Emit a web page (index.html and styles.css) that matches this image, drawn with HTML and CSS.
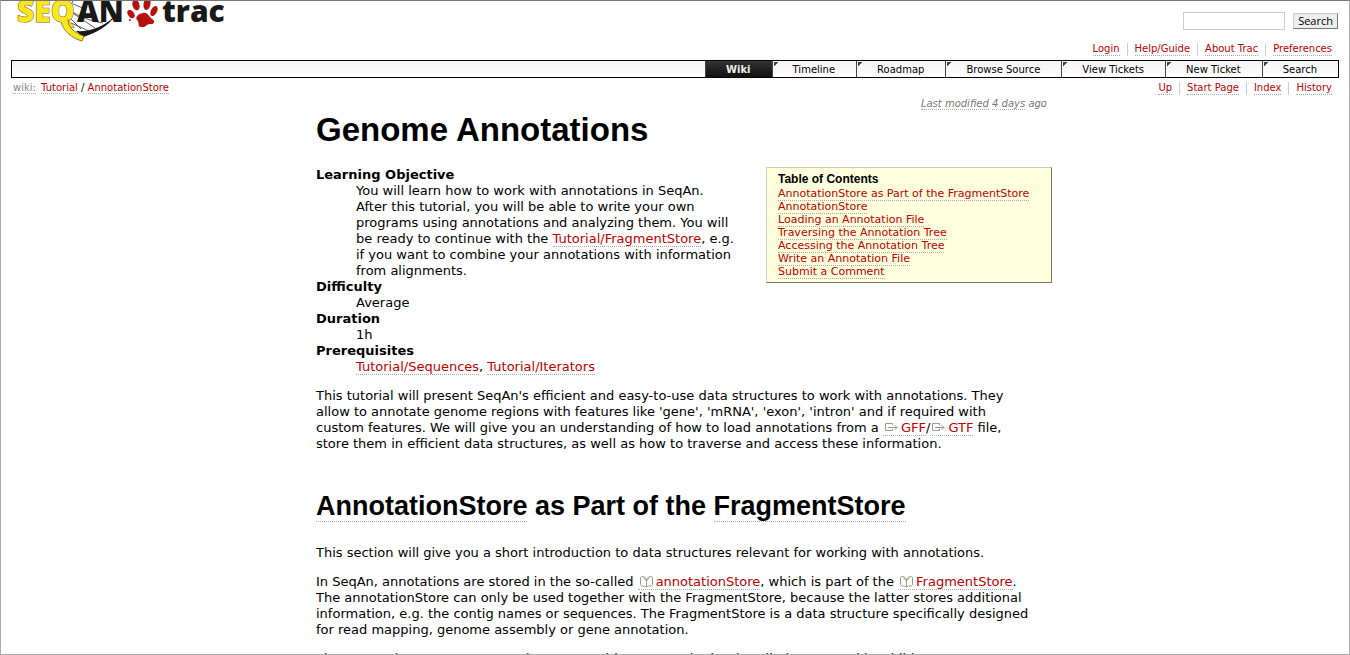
FILE: index.html
```html
<!DOCTYPE html>
<html lang="en">
<head>
<meta charset="utf-8">
<title>Tutorial/AnnotationStore – SeqAn Trac</title>
<link rel="stylesheet" href="styles.css">
</head>
<body>
<div class="page">
<header class="banner">
<a class="logo" href="#" aria-label="SeqAn Trac">
<svg width="220" height="42" viewBox="0 0 220 42" aria-hidden="true">
<g fill="none" stroke="#333" stroke-width=".8">
<path d="M57 8C68 16 80 20 92 22M57 15L70 28M62 -1L57 15M60 22L78 30M62 3L72 7M60 11L84 27M106 -1C110 8 106 14 100 19"/>
</g>
<path d="M65 30C79 31 92 26 103 16C98 24 86 32 72 36Z" fill="#191919"/>
<text class="logo-seq" x="6" y="21">SEQ</text>
<path d="M52 16L57 16C56 25 63 32 73 35L71 40C60 37 52 29 50 19Z" fill="#ffe51c"/>
<path d="M57 18C57 26 63 32 73 35L71 40C60 37 52 29 50 21" fill="none" stroke="#554d12" stroke-width=".7"/>
<text class="logo-an" x="66" y="21">AN</text>
<g fill="#b70e0e">
<ellipse cx="120" cy="13" rx="3" ry="4.500" transform="rotate(-35 120 13)"/>
<ellipse cx="125" cy="4" rx="3.500" ry="5.500" transform="rotate(-14 125 4)"/>
<ellipse cx="136" cy="3" rx="3.500" ry="6" transform="rotate(10 136 3)"/>
<ellipse cx="143" cy="10" rx="3" ry="5.500" transform="rotate(28 143 10)"/>
<path d="M132 12C137 11 138 16 141 18C145 20 143 24 139 23C135 23 135 27 130 26C126 26 129 21 126 19C124 16 127 13 132 12Z"/>
<circle cx="119" cy="19" r="1"/>
</g>
<text class="logo-trac" x="151" y="21">trac</text>
</svg>
</a>
<div class="tools">
<form class="search" role="search">
<input type="text" aria-label="Search query">
<button type="submit">Search</button>
</form>
<nav class="metanav" aria-label="Account">
<ul class="links">
<li><a href="#">Login</a></li>
<li><a href="#">Help/Guide</a></li>
<li><a href="#">About Trac</a></li>
<li><a href="#">Preferences</a></li>
</ul>
</nav>
</div>
</header>
<nav class="mainnav" aria-label="Main">
<ul>
<li class="active"><a href="#">Wiki</a></li>
<li><a href="#">Timeline</a></li>
<li><a href="#">Roadmap</a></li>
<li><a href="#">Browse Source</a></li>
<li><a href="#">View Tickets</a></li>
<li><a href="#">New Ticket</a></li>
<li><a href="#">Search</a></li>
</ul>
</nav>
<div class="context">
<div class="path"><a class="root" href="#">wiki:</a> <a href="#">Tutorial</a> / <a href="#">AnnotationStore</a></div>
<ul class="links">
<li><a href="#">Up</a></li>
<li><a href="#">Start Page</a></li>
<li><a href="#">Index</a></li>
<li><a href="#">History</a></li>
</ul>
</div>
<main class="wiki">
<p class="modified"><a href="#">Last modified</a> <a href="#">4 days</a> ago</p>
<h1>Genome Annotations</h1>
<nav class="toc" aria-label="Table of Contents">
<h4>Table of Contents</h4>
<ol>
<li><a href="#store">AnnotationStore as Part of the FragmentStore</a></li>
<li><a href="#">AnnotationStore</a></li>
<li><a href="#">Loading an Annotation File</a></li>
<li><a href="#">Traversing the Annotation Tree</a></li>
<li><a href="#">Accessing the Annotation Tree</a></li>
<li><a href="#">Write an Annotation File</a></li>
<li><a href="#">Submit a Comment</a></li>
</ol>
</nav>
<dl>
<dt>Learning Objective</dt>
<dd>You will learn how to work with annotations in SeqAn. After this tutorial, you will be able to write your own programs using annotations and analyzing them. You will be ready to continue with the <a href="#">Tutorial/FragmentStore</a>, e.g. if you want to combine your annotations with information from alignments.</dd>
<dt>Difficulty</dt>
<dd>Average</dd>
<dt>Duration</dt>
<dd>1h</dd>
<dt>Prerequisites</dt>
<dd><a href="#">Tutorial/Sequences</a>, <a href="#">Tutorial/Iterators</a></dd>
</dl>
<p>This tutorial will present SeqAn's efficient and easy-to-use data structures to work with annotations. They allow to annotate genome regions with features like 'gene', 'mRNA', 'exon', 'intron' and if required with custom features. We will give you an understanding of how to load annotations from a <a class="ext" href="#"><svg width="13" height="9" viewBox="0 0 13 9" aria-hidden="true"><path d="M7.500 2V.5H.5V7.500H7.500V6M3 4.500H12M9.500 2L12 4.500L9.500 7"/></svg>GFF</a>/<a class="ext" href="#"><svg width="13" height="9" viewBox="0 0 13 9" aria-hidden="true"><path d="M7.500 2V.5H.5V7.500H7.500V6M3 4.500H12M9.500 2L12 4.500L9.500 7"/></svg>GTF</a> file, store them in efficient data structures, as well as how to traverse and access these information.</p>
<h2 id="store"><a href="#">AnnotationStore</a> as Part of the <a href="#">FragmentStore</a></h2>
<p>This section will give you a short introduction to data structures relevant for working with annotations.</p>
<p>In SeqAn, annotations are stored in the so-called <a class="doc" href="#"><svg width="13" height="12" viewBox="0 0 13 12" aria-hidden="true"><path d="M6.500 11V4C6 1.500 4 .5 2 .5C1 .5.5 1 .5 2V8C.5 9 1 10 2 10C4 10 6 10 6.500 11C7 10 9 10 11 10C12 10 12.500 9 12.500 8V2C12.500 1 12 .5 11 .5C9 .5 7 1.500 6.500 4M3.500 1.500L6.500 5L9.500 1.500"/></svg>annotationStore</a>, which is part of the <a class="doc" href="#"><svg width="13" height="12" viewBox="0 0 13 12" aria-hidden="true"><path d="M6.500 11V4C6 1.500 4 .5 2 .5C1 .5.5 1 .5 2V8C.5 9 1 10 2 10C4 10 6 10 6.500 11C7 10 9 10 11 10C12 10 12.500 9 12.500 8V2C12.500 1 12 .5 11 .5C9 .5 7 1.500 6.500 4M3.500 1.500L6.500 5L9.500 1.500"/></svg>FragmentStore</a>. The annotationStore can only be used together with the FragmentStore, because the latter stores additional information, e.g. the contig names or sequences. The FragmentStore is a data structure specifically designed for read mapping, genome assembly or gene annotation.</p>
<p>The annotations are represented as a tree with a root node that is called "root" and its children.</p>
</main>
</div>
</body>
</html>
```
FILE: styles.css
```css
* { box-sizing: border-box; }
html { height: 100%; overflow: hidden; }
body {
  height: 100%;
  margin: 0;
  background: #fff;
  color: #000;
  font-family: Verdana, "DejaVu Sans", sans-serif;
  font-size: 13px;
  line-height: 16px;
}
.page {
  height: 100%;
  overflow: hidden;
  padding: 0 10px;
  border: 1px solid #aaa;
  border-top-color: #777;
}
a { color: #b00; text-decoration: none; border-bottom: 1px dotted #aaa; }
ul, ol { list-style: none; margin: 0; padding: 0; }
.banner { display: flex; justify-content: space-between; height: 59px; }
.logo { border: 0; height: 42px; }
.logo svg { display: block; }
.logo text { font-family: "Open Sans", sans-serif; font-weight: 800; font-size: 30px; }
.logo .logo-seq { fill: #ffe51c; stroke: #665c14; stroke-width: 1px; paint-order: stroke; }
.logo .logo-an, .logo .logo-trac { fill: #191919; }
.tools { display: flex; flex-direction: column; align-items: flex-end; padding-top: 11px; }
.search { display: flex; align-items: center; gap: 8px; margin: 0 1px 0 0; }
.search input { width: 102px; height: 18px; border: 1px solid #ccc; padding: 0 3px; background: #fff; }
.search button {
  height: 16px;
  padding: 0 4px;
  border: 1px solid;
  border-color: #ccc #777 #777 #ccc;
  border-radius: 0;
  background: #eee;
  color: #000;
  font: 11px "Open Sans", sans-serif;
  line-height: 14px;
}
.metanav { margin-top: 13px; }
.links { display: flex; font-size: 10px; line-height: 12px; padding-right: 7px; }
.links li { padding: 0 7px; border-left: 1px solid #ccc; }
.links li:first-child { border-left: 0; }
.links li:last-child { padding-right: 0; }
.links a { display: block; }
.mainnav {
  border: 1px solid #000;
  background: linear-gradient(#f3f3f3, #fff);
  font-size: 10px;
  line-height: 15px;
}
.mainnav ul { display: flex; justify-content: flex-end; }
.mainnav li { border-left: 1px solid #444; }
.mainnav a {
  display: block;
  padding: 1px 21px 0 20px;
  border: 0;
  color: #000;
  background: linear-gradient(135deg, #444 3px, transparent 3px) 1px 1px / 5px 5px no-repeat;
}
.mainnav .active a { background: linear-gradient(#333, #111); color: #eee; font-weight: bold; }
.context { display: flex; justify-content: space-between; margin-top: 4px; font-size: 10px; line-height: 12px; }
.path { padding-left: 2px; }
.path .root { color: #888; margin-right: 2px; }
.wiki { max-width: 754px; margin: 2px auto 0; padding-left: 18px; }
.wiki p { max-width: 716px; margin: 13px 0; }
.wiki .modified { max-width: none; margin: 0; padding-right: 5px; text-align: right; font-size: 10px; line-height: 14px; font-style: italic; color: #777; }
.modified a { color: #777; }
h1, h2, h4 { font-family: Arial, "Liberation Sans", sans-serif; font-weight: bold; }
h1 { margin: 0 0 18px; font-size: 33px; line-height: 38px; }
h2 { margin: 38px 0 23px; font-size: 27px; line-height: 32px; }
h2 a { color: #000; }
.toc {
  float: right;
  min-width: 286px;
  margin: 0 0 13px 13px;
  padding: 5px 11px 4px;
  border: 1px solid;
  border-color: #ccb #776 #776 #ccb;
  background: #ffd;
  font-size: 11px;
  line-height: 13px;
}
.toc h4 { margin: 0 0 1px; font-size: 12px; line-height: 13px; }
dl { margin: 0 0 13px; }
dt { font-weight: bold; }
dd { max-width: 382px; margin: 0 0 0 40px; }
.ext svg, .doc svg { margin: 0 3px 0 2px; fill: none; stroke: #9a9e88; }
.doc svg { vertical-align: -2px; }
```
